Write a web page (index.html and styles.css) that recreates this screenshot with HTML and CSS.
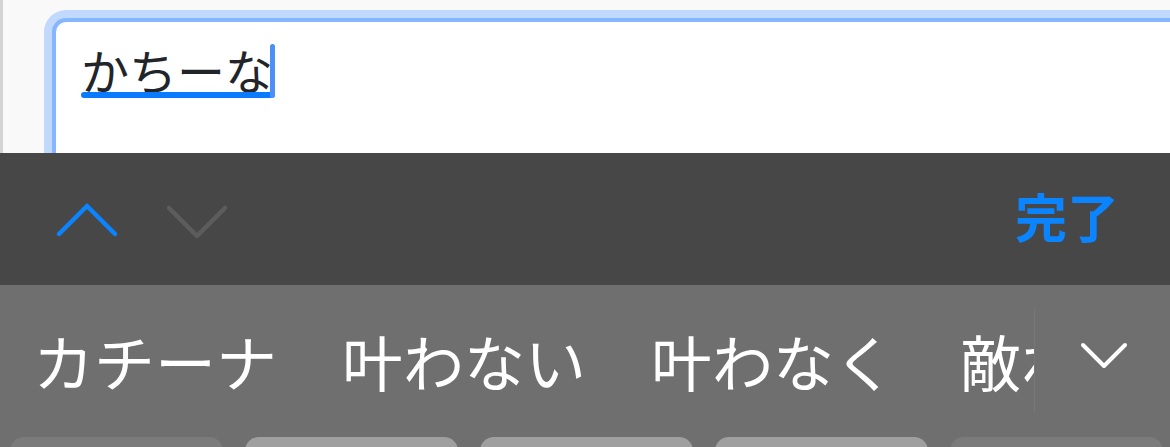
FILE: index.html
```html
<!DOCTYPE html>
<html lang="ja">
<head>
    <meta charset="UTF-8">
    <meta name="viewport" content="width=device-width, initial-scale=1.0">
    <title>かちーな</title>
    <link rel="stylesheet" href="styles.css">
</head>
<body>
    <div class="page">
        <div class="field">
            <div class="input-line">
                <div class="marked">
                    <span class="marked-text">かちーな</span>
                    <div class="underline"></div>
                </div>
                <div class="caret"></div>
            </div>
        </div>
    </div>

    <div class="toolbar">
        <div class="nav">
            <svg class="chev" width="64" height="40" viewBox="0 0 64 40">
                <polyline points="4,32 32,4 60,32" fill="none" stroke="#0a84ff" stroke-width="4.5" stroke-linecap="round" stroke-linejoin="round"/>
            </svg>
            <svg class="chev" width="64" height="40" viewBox="0 0 64 40">
                <polyline points="4,6 32,34 60,6" fill="none" stroke="#5c5c5c" stroke-width="4.5" stroke-linecap="round" stroke-linejoin="round"/>
            </svg>
        </div>
        <span class="done">完了</span>
    </div>

    <div class="keyboard">
        <div class="suggest-row">
            <div class="words">
                <span class="word">カチーナ</span>
                <span class="word">叶わない</span>
                <span class="word">叶わなく</span>
                <span class="word">敵わない</span>
            </div>
            <div class="divider"></div>
            <div class="more">
                <svg width="50" height="30" viewBox="0 0 50 30">
                    <polyline points="4,4 25,25 46,4" fill="none" stroke="#ffffff" stroke-width="4" stroke-linecap="round" stroke-linejoin="round"/>
                </svg>
            </div>
        </div>
        <div class="keys">
            <div class="key dark"></div>
            <div class="key"></div>
            <div class="key"></div>
            <div class="key"></div>
            <div class="key dark"></div>
        </div>
    </div>
</body>
</html>
```

FILE: styles.css
```css
body {
    margin: 0;
    width: 1170px;
    height: 447px;
    overflow: hidden;
    font-family: "Noto Sans CJK JP", "Noto Sans", sans-serif;
}
.page {
    height: 153px;
    box-sizing: border-box;
    background: #f9f9f9;
    border-left: 3px solid #d3d3d3;
    padding: 18px 0 0 49px;
    overflow: hidden;
}
.field {
    height: 200px;
    background: #fff;
    border: 4px solid #86b6fe;
    border-right: none;
    border-radius: 14px 0 0 0;
    box-shadow: 0 0 0 8px #c1d9fc;
    padding: 22px 0 0 25px;
}
.input-line {
    display: flex;
    align-items: flex-start;
}
.marked {
    display: flex;
    flex-direction: column;
    padding-top: 2px;
}
.marked-text {
    font-size: 48px;
    line-height: 46px;
    height: 46px;
    color: #212529;
}
.underline {
    height: 6px;
    border-radius: 3px;
    background: #0a7aff;
}
.caret {
    width: 5px;
    height: 54px;
    border-radius: 3px;
    background: #4b8ff7;
    margin-left: -3px;
}
.toolbar {
    height: 132px;
    background: #474747;
    display: flex;
    align-items: center;
    justify-content: space-between;
    padding: 0 51px 0 55px;
}
.nav {
    display: flex;
    gap: 46px;
    padding-top: 6px;
}
.done {
    font-size: 52px;
    font-weight: bold;
    color: #0a84ff;
    line-height: 1.2;
    padding-bottom: 6px;
}
.keyboard {
    height: 162px;
    background: #6f6f6f;
}
.suggest-row {
    height: 152px;
    display: flex;
    align-items: center;
}
.words {
    width: 1034px;
    display: flex;
    gap: 65px;
    padding-left: 33px;
    box-sizing: border-box;
    overflow: hidden;
    white-space: nowrap;
}
.word {
    font-size: 61px;
    line-height: 1.3;
    color: #fff;
    flex-shrink: 0;
}
.divider {
    width: 1px;
    height: 104px;
    background: #777;
}
.more {
    flex: 1;
    display: flex;
    justify-content: center;
    padding-left: 2px;
    padding-bottom: 10px;
}
.keys {
    display: flex;
    gap: 22px;
    padding-left: 10px;
}
.key {
    width: 213px;
    height: 20px;
    border-radius: 14px 14px 0 0;
    background: #9f9f9f;
}
.key.dark {
    background: #7b7b7b;
}
```
